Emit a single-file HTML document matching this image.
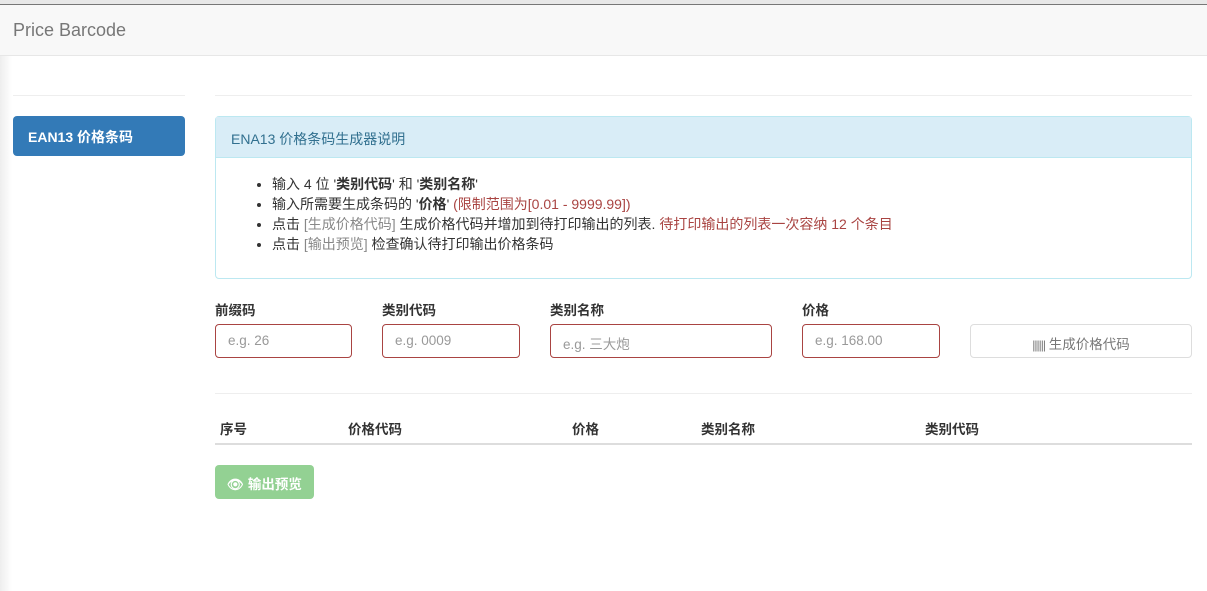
<!DOCTYPE html>
<html><head><meta charset="utf-8"><style>
*{box-sizing:border-box;margin:0;padding:0}
body{width:1207px;height:591px;overflow:hidden;background:#fff;font-family:"Liberation Sans","Noto Sans CJK SC",sans-serif;font-size:14px;color:#333;position:relative}
.topbar{position:absolute;left:0;top:0;width:1207px;height:5px;background:#e8e8e8;border-bottom:1px solid #777}
.nav{position:absolute;left:0;top:5px;width:1207px;height:51px;background:#f8f8f8;border-bottom:1px solid #e7e7e7}
.nav span{position:absolute;left:13px;top:15px;font-size:18px;color:#777}
.shadow{position:absolute;left:0;top:56px;width:12px;height:535px;background:linear-gradient(to right,#eee,#fff)}
.hr{position:absolute;height:1px;background:#eee}
.side{position:absolute;left:13px;top:116px;width:172px;height:40px;background:#337ab7;border-radius:4px;color:#fff;font-weight:bold;padding:11px 15px;font-size:14px}
.panel{position:absolute;left:215px;top:116px;width:977px;height:163px;border:1px solid #bce8f1;border-radius:4px}
.ph{height:41px;background:#d9edf7;border-bottom:1px solid #bce8f1;color:#31708f;padding:12px 15px;font-size:14px}
.panel ul{position:absolute;left:56px;top:57px;font-size:14px;line-height:20px;list-style:disc}
.red{color:#a94442}.gr{color:#888}
.lbl{position:absolute;top:299px;font-weight:bold;font-size:13.5px}
.in{position:absolute;top:324px;height:34px;border:1px solid #a94442;border-radius:4px;color:#999;padding:8px 12px;font-size:13.5px}
.btn{position:absolute;left:970px;top:324px;width:222px;height:34px;border:1px solid #ddd;border-radius:4px;color:#777;text-align:center;padding:8px;font-size:13.5px}
.th{position:absolute;top:418px;font-weight:bold;font-size:13.5px}
.tb{position:absolute;left:215px;top:443px;width:977px;height:2px;background:#ddd}
.gb{position:absolute;left:215px;top:465px;width:99px;height:34px;background:#93d193;border-radius:4px;color:#fff;font-weight:bold;padding:8px 12px;font-size:13.5px}
</style></head><body>
<div class="topbar"></div>
<div class="nav"><span>Price Barcode</span></div>
<div class="shadow"></div>
<div class="hr" style="left:13px;top:95px;width:172px"></div>
<div class="hr" style="left:215px;top:95px;width:977px"></div>
<div class="side">EAN13 价格条码</div>
<div class="panel"><div class="ph">ENA13 价格条码生成器说明</div>
<ul>
<li>输入 4 位 '<b>类别代码</b>' 和 '<b>类别名称</b>'</li>
<li>输入所需要生成条码的 '<b>价格</b>' <span class="red">(限制范围为[0.01 - 9999.99])</span></li>
<li>点击 <span class="gr">[生成价格代码]</span> 生成价格代码并增加到待打印输出的列表. <span class="red">待打印输出的列表一次容纳 12 个条目</span></li>
<li>点击 <span class="gr">[输出预览]</span> 检查确认待打印输出价格条码</li>
</ul></div>
<div class="lbl" style="left:215px">前缀码</div>
<div class="lbl" style="left:382px">类别代码</div>
<div class="lbl" style="left:550px">类别名称</div>
<div class="lbl" style="left:802px">价格</div>
<div class="in" style="left:215px;width:137px">e.g. 26</div>
<div class="in" style="left:382px;width:138px">e.g. 0009</div>
<div class="in" style="left:550px;width:222px">e.g. 三大炮</div>
<div class="in" style="left:802px;width:138px">e.g. 168.00</div>
<div class="btn"><span style="letter-spacing:-1px;font-size:12px">||||||</span> 生成价格代码</div>
<div class="hr" style="left:215px;top:393px;width:977px"></div>
<div class="th" style="left:220px">序号</div>
<div class="th" style="left:348px">价格代码</div>
<div class="th" style="left:572px">价格</div>
<div class="th" style="left:701px">类别名称</div>
<div class="th" style="left:925px">类别代码</div>
<div class="tb"></div>
<div class="gb">👁 输出预览</div>
</body></html>
